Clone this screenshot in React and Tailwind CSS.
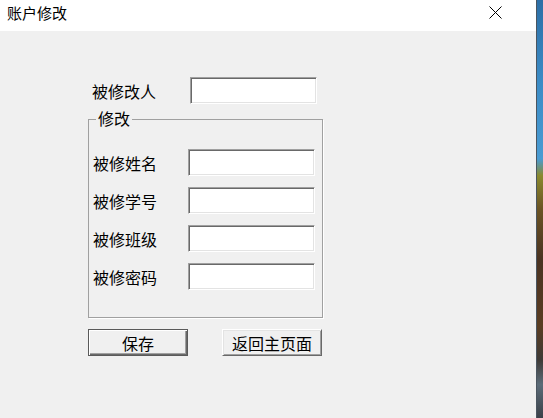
import React from 'react';

const font = { fontFamily: '"Noto Sans CJK SC", "Noto Sans", sans-serif' };

const Field = ({ className = '' }) => (
  <div
    className={`w-[127px] h-[27px] bg-white border border-t-[#a0a0a0] border-l-[#a0a0a0] border-b-white border-r-white shadow-[inset_1px_1px_0_#696969,inset_-1px_-1px_0_#e3e3e3] ${className}`}
  />
);

const Row = ({ label, labelWidth }) => (
  <div className="flex items-center h-[27px]">
    <span className={`${labelWidth} text-[16px] leading-none text-black`}>{label}</span>
    <Field />
  </div>
);

const App = () => {
  const fields = ['被修姓名', '被修学号', '被修班级', '被修密码'];

  return (
    <div className="flex w-[543px] h-[418px] overflow-hidden" style={font}>
      <div className="flex flex-col w-[537px] h-full border-r border-[#4a5560]">
        {/* title bar */}
        <div className="flex items-center justify-between h-[31px] bg-white pl-[7px] pr-[34px] pb-[6px]">
          <span className="text-[15px] leading-none text-black">账户修改</span>
          <svg width="13" height="13" viewBox="0 0 13 13">
            <path d="M0.5 0.5 L12.5 12.5 M12.5 0.5 L0.5 12.5" stroke="#000" strokeWidth="1" fill="none" />
          </svg>
        </div>

        {/* body */}
        <div className="flex-1 bg-[#f0f0f0] pt-[46px]">
          <div className="ml-[92px]">
            <Row label="被修改人" labelWidth="w-[98px]" />
          </div>

          <div className="relative ml-[88px] mt-[15px] w-[235px] h-[199px] border border-[#a0a0a0] shadow-[1px_1px_0_#fff]">
            <span className="absolute left-[7px] top-[-10px] px-[2px] bg-[#f0f0f0] text-[16px] leading-none text-black">
              修改
            </span>
            <div className="flex flex-col gap-[11px] pt-[29px] pl-[4px]">
              {fields.map((f) => (
                <Row key={f} label={f} labelWidth="w-[95px]" />
              ))}
            </div>
          </div>

          <div className="flex gap-[34px] ml-[88px] mt-[11px]">
            <button className="w-[100px] h-[27px] flex items-center justify-center bg-[#f0f0f0] border border-[#5a5a5a] shadow-[inset_1px_1px_0_#fff,inset_-1px_-1px_0_#696969,inset_-2px_-2px_0_#a0a0a0] text-[16px] leading-none text-black">
              保存
            </button>
            <button className="w-[100px] h-[27px] flex items-center justify-center bg-[#f0f0f0] border border-t-white border-l-white border-b-[#696969] border-r-[#696969] shadow-[inset_1px_1px_0_#e3e3e3,inset_-1px_-1px_0_#a0a0a0] text-[16px] leading-none text-black">
              返回主页面
            </button>
          </div>
        </div>
      </div>

      {/* desktop strip */}
      <div className="flex-1 h-full bg-[linear-gradient(180deg,#2d6fa6_0%,#3b8cc6_20%,#4a9bd2_38%,#8a8a2e_42%,#6b5424_50%,#4a3322_62%,#5a3d22_78%,#3e3a36_86%,#5b6b78_92%,#3a4048_100%)]" />
    </div>
  );
};

export default App;
